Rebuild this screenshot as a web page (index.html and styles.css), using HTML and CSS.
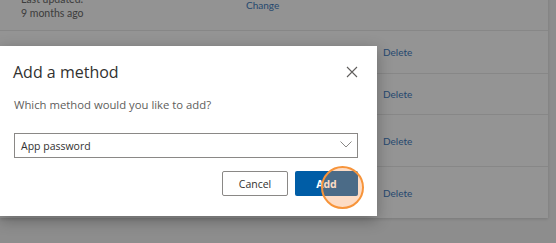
FILE: index.html
```html
<!DOCTYPE html>
<html lang="en">
<head>
  <meta charset="UTF-8" />
  <title>Security info</title>
  <link rel="stylesheet" href="styles.css">
</head>
<body>

<!-- Methods list (behind the dialog) -->
<div class="page">
  <div class="card">
    <div class="row row-top">
      <div class="meta">
        <span>Last updated:</span>
        <span>9 months ago</span>
      </div>
      <a class="link link-change">Change</a>
    </div>
    <div class="row row-a"><a class="link">Delete</a></div>
    <div class="row row-b"><a class="link">Delete</a></div>
    <div class="row row-c"><a class="link">Delete</a></div>
    <div class="row row-d"><a class="link">Delete</a></div>
  </div>
</div>

<div class="overlay"></div>

<!-- Add a method dialog -->
<div class="dialog">
  <div class="dialog-head">
    <h2>Add a method</h2>
    <svg class="close" width="12" height="12" viewBox="0 0 12 12">
      <path d="M1 1 L11 11 M11 1 L1 11" stroke="#605e5c" stroke-width="1.1" fill="none" />
    </svg>
  </div>
  <p class="question">Which method would you like to add?</p>
  <div class="select">
    <span>App password</span>
    <svg width="12" height="7" viewBox="0 0 12 7">
      <path d="M0.5 0.5 L6 6 L11.5 0.5" stroke="#8a8886" stroke-width="1" fill="none" />
    </svg>
  </div>
  <div class="actions">
    <button class="btn btn-cancel">Cancel</button>
    <button class="btn btn-add">Add</button>
  </div>
  <span class="click-mark"></span>
</div>

</body>
</html>
```

FILE: styles.css
```css
* {
  box-sizing: border-box;
}
body {
  margin: 0;
  width: 556px;
  height: 243px;
  overflow: hidden;
  background: #f3f3f3;
  font-family: Lato, sans-serif;
}
.page {
  padding: 0 8px 0 0;
}
.card {
  width: 548px;
  margin-top: -10px;
  background: #fff;
  box-shadow: 0 1px 3px rgba(0, 0, 0, 0.15);
}
.row {
  display: flex;
  align-items: center;
  border-top: 1px solid #e8e8e8;
  padding-left: 383px;
}
.row-top {
  height: 40px;
  border-top: none;
  padding-left: 21px;
  background: #fdfdfd;
  align-items: flex-start;
  padding-top: 2px;
}
.meta {
  display: flex;
  flex-direction: column;
  width: 225px;
  font-size: 10.5px;
  line-height: 14px;
  color: #6a6a6a;
}
.link {
  font-size: 10px;
  line-height: 12px;
  color: #3f7dbf;
}
.link-change {
  margin-top: 7px;
}
.row-a { height: 43px; }
.row-b { height: 41px; }
.row-c { height: 52px; }
.row-d { height: 52px; }
.overlay {
  position: absolute;
  inset: 0;
  background: rgba(0, 0, 0, 0.42);
}
.dialog {
  position: absolute;
  left: 0;
  top: 46px;
  width: 377px;
  height: 170px;
  background: #fff;
  padding: 0 19px 0 14px;
  box-shadow: 0 4px 14px rgba(0, 0, 0, 0.3);
  font-family: "Open Sans", sans-serif;
}
.dialog-head {
  display: flex;
  justify-content: space-between;
  align-items: center;
  height: 52px;
}
.dialog-head h2 {
  margin: 0 0 0 -1px;
  font-size: 16px;
  font-weight: 400;
  color: #323130;
}
.question {
  margin: 0;
  font-size: 11.3px;
  line-height: 14px;
  color: #605e5c;
}
.select {
  margin-top: 21px;
  height: 25px;
  border: 1px solid #8a8886;
  display: flex;
  align-items: center;
  justify-content: space-between;
  padding: 0 5px 0 6px;
  font-size: 10.5px;
  color: #323130;
}
.select svg {
  margin-top: -2px;
}
.actions {
  display: flex;
  justify-content: flex-end;
  gap: 7px;
  margin-top: 13px;
}
.btn {
  height: 25px;
  font-family: "Open Sans", sans-serif;
  font-size: 10.5px;
  border-radius: 2px;
  cursor: pointer;
}
.btn-cancel {
  width: 66px;
  background: #fff;
  border: 1px solid #8a8886;
  color: #323130;
}
.btn-add {
  width: 63px;
  background: #005da6;
  border: none;
  color: #fff;
  font-weight: 700;
}
.click-mark {
  position: absolute;
  left: 321px;
  top: 120px;
  width: 43px;
  height: 43px;
  border-radius: 50%;
  border: 2px solid #f7943a;
  background: rgba(248, 138, 62, 0.3);
}
```
